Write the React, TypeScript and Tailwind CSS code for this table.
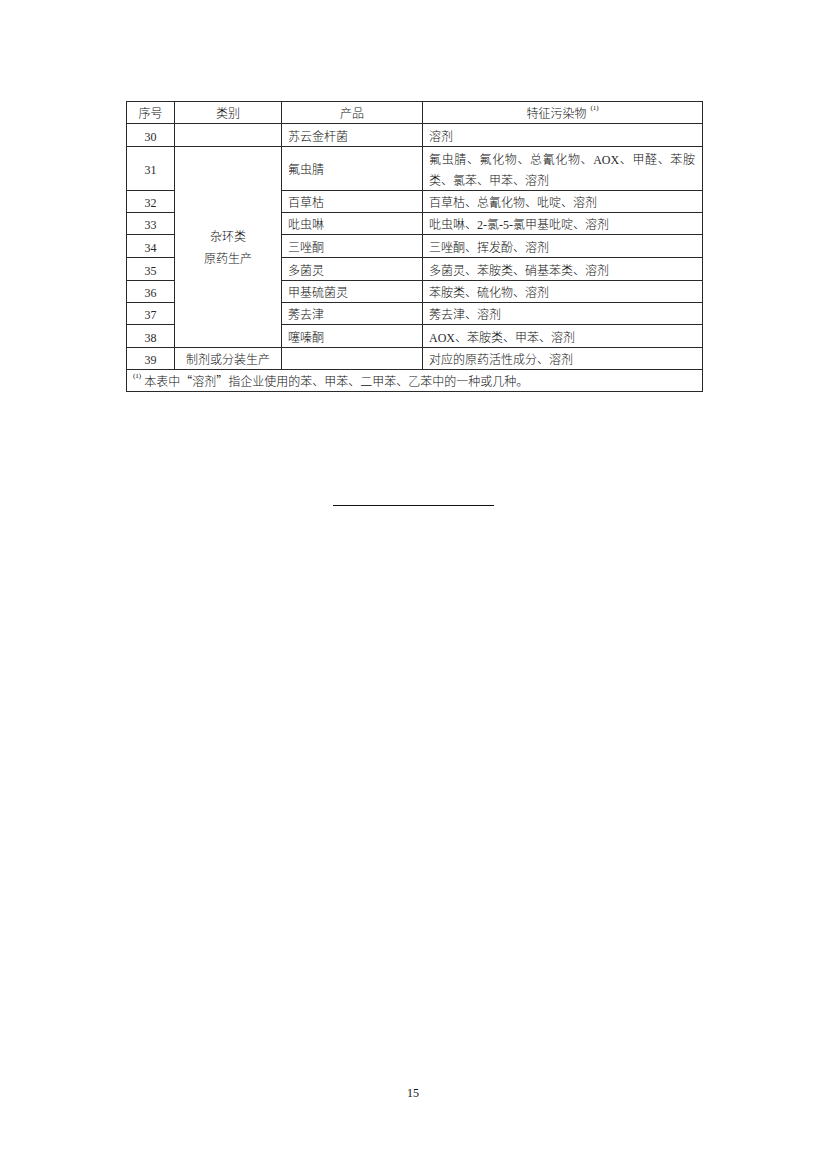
const CJK = "font-['Noto_Sans_CJK_SC',sans-serif] font-light";
const LATIN = "font-['Liberation_Serif',serif] [font-weight:400] leading-none text-[#2a2a2a]";

// Latin runs in a Times-like face, Chinese in Noto Sans CJK light
function T({ s }: { s: string }) {
  return (
    <>
      {s.split(/([\x20-\x7E]+)/).filter(Boolean).map((p, i) =>
        /^[\x20-\x7E]+$/.test(p) ? (
          <span key={i} className={LATIN}>{p}</span>
        ) : (
          <span key={i}>{p}</span>
        )
      )}
    </>
  );
}

type Row = { no: string; product: string; pollutant: string; h: string };

const ROWS: Row[] = [
  { no: "32", product: "百草枯", pollutant: "百草枯、总氰化物、吡啶、溶剂", h: "h-[22px]" },
  { no: "33", product: "吡虫啉", pollutant: "吡虫啉、2-氯-5-氯甲基吡啶、溶剂", h: "h-[22px]" },
  { no: "34", product: "三唑酮", pollutant: "三唑酮、挥发酚、溶剂", h: "h-[23px]" },
  { no: "35", product: "多菌灵", pollutant: "多菌灵、苯胺类、硝基苯类、溶剂", h: "h-[23px]" },
  { no: "36", product: "甲基硫菌灵", pollutant: "苯胺类、硫化物、溶剂", h: "h-[22px]" },
  { no: "37", product: "莠去津", pollutant: "莠去津、溶剂", h: "h-[22px]" },
  { no: "38", product: "噻嗪酮", pollutant: "AOX、苯胺类、甲苯、溶剂", h: "h-[23px]" },
];

const cell = "border border-[#2a2a2a] p-0 align-middle";
const left = `${cell} pl-[6px] pr-[7px] text-left`;
const center = `${cell} text-center`;
const sup = "inline-block align-top text-[7px] leading-[10px] mt-[1px] font-['Liberation_Serif',serif] [font-weight:400]";

export default function App() {
  return (
    <div className={`w-[826px] h-[1169px] bg-white text-[#111] flex flex-col ${CJK}`}>
      <div className="pt-[101px] pl-[126px]">
        <table className="w-[576px] table-fixed border-collapse border-[1.5px] border-[#111] text-[12px] leading-[21px]">
          <colgroup>
            <col className="w-[48px]" />
            <col className="w-[107px]" />
            <col className="w-[141px]" />
            <col className="w-[280px]" />
          </colgroup>
          <thead>
            <tr className="h-[20px]">
              <th className={`${center} font-light`}>序号</th>
              <th className={`${center} font-light`}>类别</th>
              <th className={`${center} font-light`}>产品</th>
              <th className={`${center} font-light`}>
                特征污染物
                <span className={`${sup} ml-[4px]`}>(1)</span>
              </th>
            </tr>
          </thead>
          <tbody>
            <tr className="h-[23px]">
              <td className={center}><T s="30" /></td>
              <td className={center}></td>
              <td className={left}>苏云金杆菌</td>
              <td className={left}>溶剂</td>
            </tr>
            <tr className="h-[44px]">
              <td className={center}><T s="31" /></td>
              <td className={center} rowSpan={8}>
                <div className="leading-[22px]">杂环类</div>
                <div className="leading-[22px]">原药生产</div>
              </td>
              <td className={left}>氟虫腈</td>
              <td className={left}>
                <div className="[text-align-last:justify]"><T s="氟虫腈、氟化物、总氰化物、AOX、甲醛、苯胺" /></div>
                <div>类、氯苯、甲苯、溶剂</div>
              </td>
            </tr>
            {ROWS.map((r) => (
              <tr key={r.no} className={r.h}>
                <td className={center}><T s={r.no} /></td>
                <td className={left}>{r.product}</td>
                <td className={left}><T s={r.pollutant} /></td>
              </tr>
            ))}
            <tr className="h-[22px]">
              <td className={center}><T s="39" /></td>
              <td className={center}>制剂或分装生产</td>
              <td className={left}></td>
              <td className={left}>对应的原药活性成分、溶剂</td>
            </tr>
            <tr className="h-[22px]">
              <td className={`${left} pl-[4px]`} colSpan={4}>
                <span className={`${sup} mr-[3px]`}>(1)</span>
                本表中“溶剂”指企业使用的苯、甲苯、二甲苯、乙苯中的一种或几种。
              </td>
            </tr>
          </tbody>
        </table>
      </div>

      <div className="mt-[113px] ml-[333px] w-[161px] h-px bg-[#111]" />

      <div className="flex-1" />

      <div className="mb-[68px] text-center text-[12px] leading-[16px] font-['Liberation_Serif',serif] [font-weight:400]">15</div>
    </div>
  );
}
